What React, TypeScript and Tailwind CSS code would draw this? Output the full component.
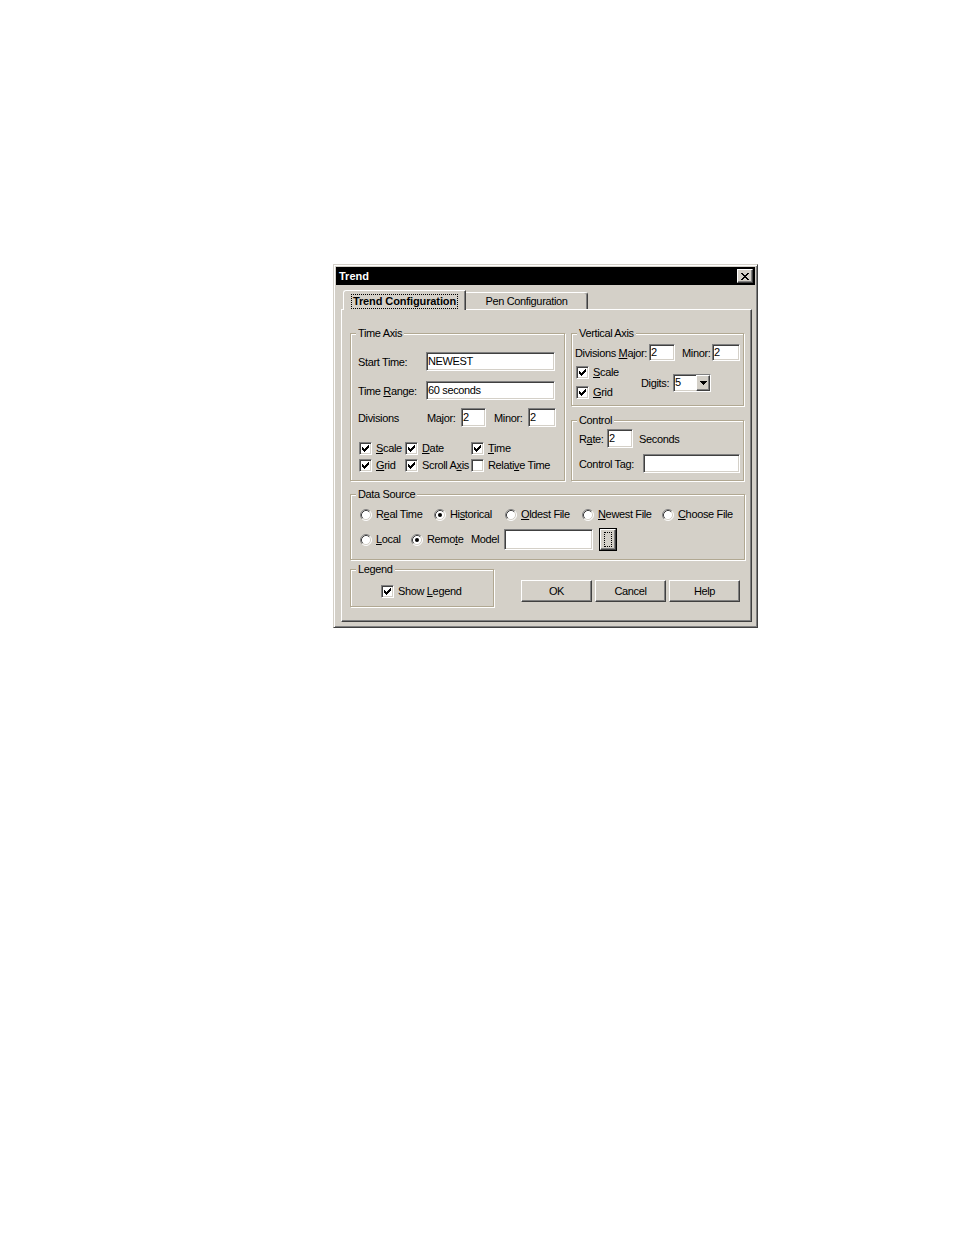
import React from "react";

const sunken =
  "bg-white border border-t-[#808080] border-l-[#808080] border-r-white border-b-white shadow-[inset_1px_1px_0_#404040,inset_-1px_-1px_0_#d4d0c8]";
const raised =
  "bg-[#d4d0c8] border border-t-white border-l-white border-r-[#404040] border-b-[#404040] shadow-[inset_-1px_-1px_0_#808080]";

const U = ({ children }: { children: React.ReactNode }) => (
  <span className="underline decoration-1 underline-offset-[1px]">{children}</span>
);

// label sitting 1px low next to a field, like the reference
const L = ({ className, children }: { className?: string; children: React.ReactNode }) => (
  <span className={`shrink-0 whitespace-nowrap translate-y-[1px] ${className ?? ""}`}>{children}</span>
);

const Field = ({ className, text }: { className: string; text?: string }) => (
  <div className={`${sunken} pl-[1px] flex items-center shrink-0 ${className}`}>{text}</div>
);

const Check = ({ on = true }: { on?: boolean }) => (
  <div className={`${sunken} w-[13px] h-[13px] flex items-center justify-center shrink-0`}>
    {on && (
      <svg width="7" height="7" viewBox="0 0 7 7" shapeRendering="crispEdges">
        <path d="M0 2h1v3H0zM1 3h1v3H1zM2 4h1v3H2zM3 3h1v3H3zM4 2h1v3H4zM5 1h1v3H5zM6 0h1v3H6z" fill="#000" />
      </svg>
    )}
  </div>
);

const Radio = ({ on = false }: { on?: boolean }) => (
  <svg width="12" height="12" viewBox="0 0 12 12" className="shrink-0">
    <circle cx="6" cy="6" r="5" fill="#fff" />
    <path d="M2.11 9.89A5.5 5.5 0 0 1 9.89 2.11" fill="none" stroke="#808080" />
    <path d="M9.89 2.11A5.5 5.5 0 0 1 2.11 9.89" fill="none" stroke="#fff" />
    <path d="M2.82 9.18A4.5 4.5 0 0 1 9.18 2.82" fill="none" stroke="#404040" />
    <path d="M9.18 2.82A4.5 4.5 0 0 1 2.82 9.18" fill="none" stroke="#d4d0c8" />
    {on && <circle cx="6" cy="6" r="2" fill="#000" />}
  </svg>
);

const Btn = ({ children }: { children: React.ReactNode }) => (
  <div className={`${raised} w-[71px] h-[22px] flex items-center justify-center`}>{children}</div>
);

const Group = ({
  label,
  className,
  children,
}: {
  label: string;
  className: string;
  children?: React.ReactNode;
}) => (
  <div className={`border border-[#b1a892] shadow-[inset_1px_1px_0_#fff,1px_1px_0_#fff] shrink-0 ${className}`}>
    <div className="-mt-[7px] ml-[5px] w-fit px-[2px] bg-[#d4d0c8] h-[13px]">{label}</div>
    {children}
  </div>
);

const CheckItem = ({ className, on = true, children }: { className?: string; on?: boolean; children: React.ReactNode }) => (
  <div className={`flex items-center shrink-0 ${className ?? ""}`}>
    <Check on={on} />
    <span className="ml-[4px] whitespace-nowrap">{children}</span>
  </div>
);

const RadioItem = ({ className, on = false, children }: { className?: string; on?: boolean; children: React.ReactNode }) => (
  <div className={`flex items-center shrink-0 ${className ?? ""}`}>
    <Radio on={on} />
    <span className="ml-[4px] whitespace-nowrap">{children}</span>
  </div>
);

export default function App() {
  return (
    <div className="w-[954px] h-[1235px] bg-white pt-[264px] pl-[333px] font-['Liberation_Sans',Arial,sans-serif] text-[11px] leading-[13px] tracking-[-0.35px] text-black">
      <div className="w-[425px] h-[364px] bg-[#d4d0c8] border border-t-[#d4d0c8] border-l-[#d4d0c8] border-r-[#404040] border-b-[#404040] shadow-[inset_1px_1px_0_#fff,inset_-1px_-1px_0_#808080] p-[2px] flex flex-col">
        {/* title bar */}
        <div className="h-[18px] bg-black flex items-center justify-between pl-[3px] pr-[2px] shrink-0">
          <span className="text-white font-bold tracking-normal">Trend</span>
          <div className={`${raised} w-[16px] h-[14px] flex items-center justify-center`}>
            <svg width="8" height="7" viewBox="0 0 8 7" shapeRendering="crispEdges">
              <path
                d="M0 0h2v1H0zM6 0h2v1H6zM1 1h2v1H1zM5 1h2v1H5zM2 2h4v1H2zM3 3h2v1H3zM2 4h4v1H2zM1 5h2v1H1zM5 5h2v1H5zM0 6h2v1H0zM6 6h2v1H6z"
                fill="#000"
              />
            </svg>
          </div>
        </div>

        {/* tabs */}
        <div className="mt-[5px] ml-[7px] flex h-[20px] shrink-0">
          <div className="relative z-10 w-[123px] h-[20px] bg-[#d4d0c8] border-t border-l border-r border-t-white border-l-white border-r-[#404040] rounded-tl-[3px] shadow-[inset_-1px_0_0_#808080] flex justify-center pt-[3px]">
            <span className="font-bold tracking-[-0.1px] border border-dotted border-black px-[1px] h-[15px] leading-[13px] whitespace-nowrap">
              Trend Configuration
            </span>
          </div>
          <div className="mt-[2px] w-[122px] h-[18px] bg-[#d4d0c8] border-t border-r border-t-white border-r-[#404040] rounded-tr-[3px] shadow-[inset_-1px_0_0_#808080] flex items-center justify-center pb-[1px]">
            Pen Configuration
          </div>
        </div>

        {/* tab panel */}
        <div className="-mt-[1px] ml-[5px] w-[411px] h-[313px] shrink-0 bg-[#d4d0c8] border border-t-white border-l-white border-r-[#404040] border-b-[#404040] shadow-[inset_-1px_-1px_0_#808080] pl-[8px] pt-[23px]">
          <div className="flex gap-[6px]">
            {/* Time Axis */}
            <Group label="Time Axis" className="w-[215px] h-[148px]">
              <div className="mt-[12px] h-[19px] pl-[7px] flex items-center">
                <L className="w-[68px]">Start Time:</L>
                <Field className="w-[129px] h-[19px]" text="NEWEST" />
              </div>
              <div className="mt-[10px] h-[19px] pl-[7px] flex items-center">
                <L className="w-[68px]">
                  Time <U>R</U>ange:
                </L>
                <Field className="w-[129px] h-[19px]" text="60 seconds" />
              </div>
              <div className="mt-[8px] h-[19px] pl-[7px] flex items-center">
                <L className="w-[69px]">Divisions</L>
                <L className="w-[34px]">Major:</L>
                <Field className="w-[25px] h-[19px]" text="2" />
                <L className="ml-[8px] w-[34px]">Minor:</L>
                <Field className="w-[28px] h-[19px]" text="2" />
              </div>
              <div className="mt-[15px] h-[13px] pl-[8px] flex items-center">
                <CheckItem className="w-[46px]">
                  <U>S</U>cale
                </CheckItem>
                <CheckItem className="w-[66px]">
                  <U>D</U>ate
                </CheckItem>
                <CheckItem>
                  <U>T</U>ime
                </CheckItem>
              </div>
              <div className="mt-[4px] h-[13px] pl-[8px] flex items-center">
                <CheckItem className="w-[46px]">
                  <U>G</U>rid
                </CheckItem>
                <CheckItem className="w-[66px]">
                  Scroll A<U>x</U>is
                </CheckItem>
                <CheckItem on={false}>
                  Relati<U>v</U>e Time
                </CheckItem>
              </div>
            </Group>

            {/* right column */}
            <div className="flex flex-col w-[173px]">
              <Group label="Vertical Axis" className="w-[173px] h-[73px]">
                <div className="mt-[4px] h-[17px] pl-[3px] flex items-center">
                  <L className="w-[74px]">
                    Divisions <U>M</U>ajor:
                  </L>
                  <Field className="w-[26px] h-[17px]" text="2" />
                  <L className="ml-[7px] w-[30px]">Minor:</L>
                  <Field className="w-[28px] h-[17px]" text="2" />
                </div>
                <div className="mt-[5px] flex items-center">
                  <div className="w-[69px] pl-[4px] flex flex-col gap-[7px] shrink-0">
                    <CheckItem>
                      <U>S</U>cale
                    </CheckItem>
                    <CheckItem>
                      <U>G</U>rid
                    </CheckItem>
                  </div>
                  <L className="w-[32px]">Digits:</L>
                  <div className={`${sunken} w-[38px] h-[18px] flex shrink-0`}>
                    <span className="flex-1 pl-[1px] leading-[14px]">5</span>
                    <div className={`${raised} w-[14px] h-full flex items-center justify-center`}>
                      <svg width="7" height="4" viewBox="0 0 7 4" shapeRendering="crispEdges">
                        <path d="M0 0h7v1H0zM1 1h5v1H1zM2 2h3v1H2zM3 3h1v1H3z" fill="#000" />
                      </svg>
                    </div>
                  </div>
                </div>
              </Group>

              <Group label="Control" className="mt-[14px] w-[173px] h-[61px]">
                <div className="mt-[2px] h-[19px] pl-[7px] flex items-center">
                  <L className="w-[28px]">
                    R<U>a</U>te:
                  </L>
                  <Field className="w-[26px] h-[19px]" text="2" />
                  <L className="ml-[6px]">Seconds</L>
                </div>
                <div className="mt-[6px] h-[19px] pl-[7px] flex items-center">
                  <L className="w-[64px]">Control Tag:</L>
                  <Field className="w-[97px] h-[19px]" />
                </div>
              </Group>
            </div>
          </div>

          {/* Data Source */}
          <Group label="Data Source" className="mt-[13px] w-[395px] h-[66px]">
            <div className="mt-[7px] h-[13px] pl-[9px] flex items-center">
              <RadioItem className="w-[74px]">
                R<U>e</U>al Time
              </RadioItem>
              <RadioItem className="w-[71px]" on>
                Hi<U>s</U>torical
              </RadioItem>
              <RadioItem className="w-[77px]">
                <U>O</U>ldest File
              </RadioItem>
              <RadioItem className="w-[80px]">
                <U>N</U>ewest File
              </RadioItem>
              <RadioItem>
                <U>C</U>hoose File
              </RadioItem>
            </div>
            <div className="mt-[7px] h-[23px] pl-[9px] flex items-center">
              <RadioItem className="w-[51px]">
                <U>L</U>ocal
              </RadioItem>
              <RadioItem className="w-[60px]" on>
                Remo<U>t</U>e
              </RadioItem>
              <span className="w-[33px] shrink-0">Model</span>
              <Field className="w-[89px] h-[21px]" />
              <div className="ml-[6px] w-[18px] h-[23px] border border-black shrink-0">
                <div className={`${raised} w-full h-full flex items-center justify-center`}>
                  <div className="w-[8px] h-[15px] border border-dotted border-black" />
                </div>
              </div>
            </div>
          </Group>

          {/* Legend + buttons */}
          <div className="mt-[9px] flex items-start">
            <Group label="Legend" className="w-[144px] h-[38px]">
              <div className="mt-[9px] pl-[30px] flex">
                <CheckItem>
                  Show <U>L</U>egend
                </CheckItem>
              </div>
            </Group>
            <div className="ml-[27px] mt-[11px] flex gap-[3px]">
              <Btn>OK</Btn>
              <Btn>Cancel</Btn>
              <Btn>Help</Btn>
            </div>
          </div>
        </div>
      </div>
    </div>
  );
}
